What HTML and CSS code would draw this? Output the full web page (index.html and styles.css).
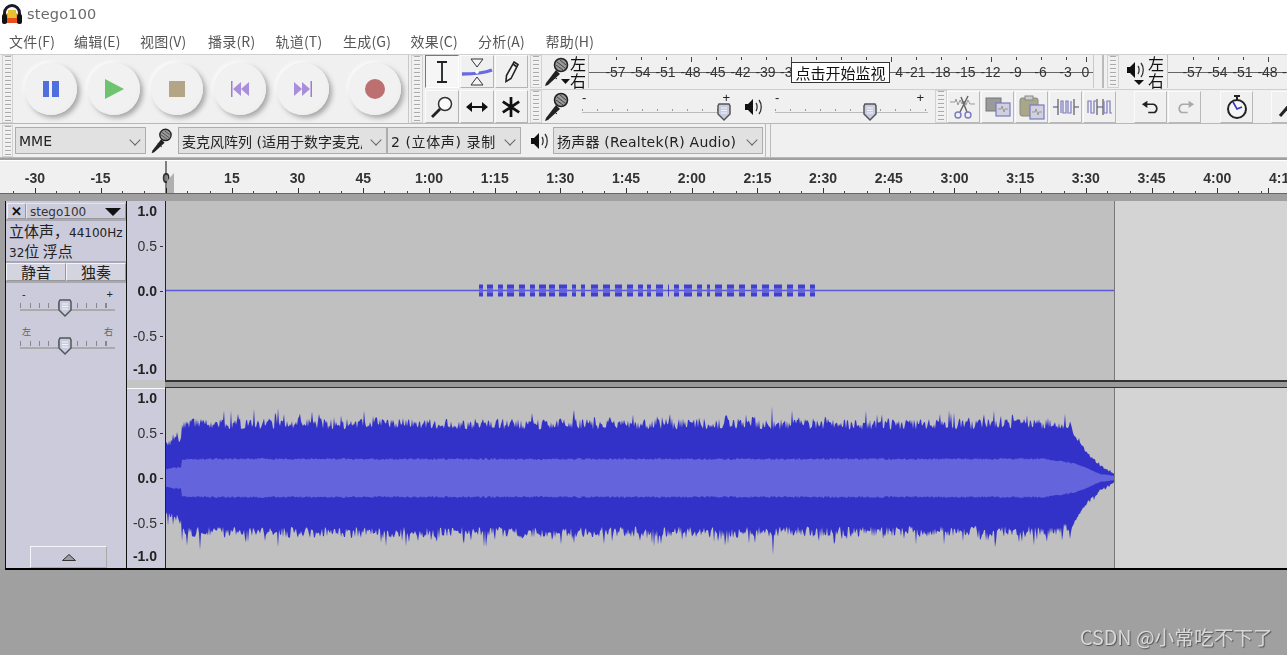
FILE: index.html
```html
<!DOCTYPE html>
<html lang="zh">
<head>
<meta charset="utf-8">
<title>stego100</title>
<link rel="stylesheet" href="styles.css">
</head>
<body>
<div class="app">
  <header class="titlebar">
    <svg class="logo" width="22" height="24" viewBox="0 0 22 24">
      <path d="M2 20V11a9 9 0 0 1 18 0v9h-3v-9a6 6 0 0 0-12 0v9z" fill="#1a1a2a"/>
      <rect x="5" y="11" width="12" height="10" rx="2" fill="#f0a020"/>
      <rect x="7" y="8" width="8" height="8" fill="#e8c030"/>
      <rect x="5" y="16" width="12" height="5" fill="#e85020"/>
      <rect x="1" y="12" width="5" height="10" rx="2" fill="#111"/>
      <rect x="16" y="12" width="5" height="10" rx="2" fill="#111"/>
    </svg>
    <span class="title-text">stego100</span>
  </header>

  <nav class="menubar">
    <span>文件(F)</span><span>编辑(E)</span><span>视图(V)</span><span>播录(R)</span><span>轨道(T)</span><span>生成(G)</span><span>效果(C)</span><span>分析(A)</span><span>帮助(H)</span>
  </nav>

  <section class="dock">
    <div class="grip grip-first"></div>
    <div class="transport">
      <button class="round"><svg width="20" height="18" viewBox="0 0 20 18"><rect x="2" y="1" width="6" height="16" fill="#4f6fdc"/><rect x="11" y="1" width="7" height="16" fill="#4f6fdc"/></svg></button>
      <button class="round"><svg width="22" height="22" viewBox="0 0 22 22"><path d="M2 1l19 10L2 21z" fill="#6ec46e"/></svg></button>
      <button class="round"><svg width="18" height="18" viewBox="0 0 18 18"><rect x="1" y="1" width="16" height="16" fill="#b3a585"/></svg></button>
      <button class="round"><svg width="20" height="18" viewBox="0 0 20 18"><rect x="1" y="1" width="1.5" height="16" fill="#9a7ed0"/><path d="M11 2L3 9l8 7zM19 2l-8 7 8 7z" fill="#a98edc"/></svg></button>
      <button class="round"><svg width="20" height="18" viewBox="0 0 20 18"><rect x="17.500" y="1" width="1.500" height="16" fill="#9a7ed0"/><path d="M1 2l8 7-8 7zM9 2l8 7-8 7z" fill="#a98edc"/></svg></button>
      <button class="round round-rec"><svg width="22" height="22" viewBox="0 0 22 22"><circle cx="11" cy="11" r="10" fill="#bd7070"/></svg></button>
    </div>
    <div class="grip grip-tools"></div>
    <div class="tools">
      <button class="tool tool-on"><svg width="16" height="24" viewBox="0 0 16 24"><path d="M3 2h10M3 22h10M8 2v20" stroke="#222" stroke-width="1.800" fill="none"/></svg></button>
      <button class="tool"><svg width="32" height="28" viewBox="0 0 32 28"><path d="M10 1h12l-6 8zM10 27h12l-6-8z" fill="#f4f4f4" stroke="#333"/><path d="M1 16c10 0 20 0 30-4" stroke="#6a6ae0" stroke-width="3.500" fill="none"/><circle cx="16" cy="14" r="1.800" fill="#fff"/></svg></button>
      <button class="tool"><svg width="18" height="24" viewBox="0 0 18 24"><path d="M12 2l4 2.500-7 14-5 3 .5-6z" fill="#f4f4f4" stroke="#222" stroke-width="1.600"/><path d="M11 4l4 3" stroke="#222" stroke-width="1.600"/></svg></button>
      <button class="tool"><svg width="24" height="24" viewBox="0 0 24 24"><circle cx="15" cy="9" r="6.500" fill="#fbfbfb" stroke="#333" stroke-width="1.500"/><path d="M10 14l-8 8" stroke="#222" stroke-width="2.800"/></svg></button>
      <button class="tool"><svg width="24" height="14" viewBox="0 0 24 14"><path d="M5 7h14" stroke="#111" stroke-width="2"/><path d="M1 7l6-5v10zM23 7l-6-5v10z" fill="#111"/></svg></button>
      <button class="tool"><svg width="20" height="22" viewBox="0 0 22 24"><path d="M11 1v22M2 6l18 12M20 6L2 18" stroke="#111" stroke-width="3"/></svg></button>
    </div>

    <div class="dock-right">
      <div class="dock-row">
        <div class="grip grip-small"></div>
        <svg class="mic mic-rec" width="26" height="30" viewBox="0 0 26 30"><use href="#mic-shape"/><path d="M17 22h9l-4.500 5z" fill="#111"/></svg>
        <div class="lr"><span>左</span><span>右</span></div>
        <div class="meter meter-rec">
          <span class="m">-57</span><span class="m">-54</span><span class="m">-51</span><span class="m major">-48</span><span class="m">-45</span><span class="m">-42</span><span class="m">-39</span><span class="m major m-l">-3</span><span class="m"></span><span class="m"></span><span class="m"></span><span class="m major m-r">4</span><span class="m">-21</span><span class="m">-18</span><span class="m">-15</span><span class="m major">-12</span><span class="m">-9</span><span class="m">-6</span><span class="m">-3</span><span class="m m-zero major">0</span>
          <span class="monitor">点击开始监视</span>
        </div>
        <div class="meter-end"></div>
        <div class="grip grip-meter2"></div>
        <svg class="speaker speaker-play" width="22" height="30" viewBox="0 0 22 30"><use href="#speaker-shape" y="3"/><path d="M8 23h10l-5 5z" fill="#111"/></svg>
        <div class="lr"><span>左</span><span>右</span></div>
        <div class="meter meter-play">
          <span class="m">-57</span><span class="m">-54</span><span class="m">-51</span><span class="m major">-48</span><span class="m m-l">-</span>
        </div>
      </div>
      <div class="dock-row">
        <div class="grip grip-small"></div>
        <svg class="mic" width="26" height="30" viewBox="0 0 26 30"><use href="#mic-shape"/></svg>
        <div class="slider slider-mic"><i class="minus">-</i><i class="plus">+</i><svg class="knob" width="16" height="20" viewBox="0 0 16 20"><use href="#knob-shape"/></svg></div>
        <svg class="speaker speaker-out" width="18" height="20" viewBox="0 0 18 20"><use href="#speaker-shape"/></svg>
        <div class="slider slider-out"><i class="minus">-</i><i class="plus">+</i><svg class="knob" width="16" height="20" viewBox="0 0 16 20"><use href="#knob-shape"/></svg></div>
        <div class="grip grip-edit"></div>
        <div class="edit-group">
          <button class="edit"><svg width="30" height="26" viewBox="0 0 30 26"><path d="M1 8h5l1-3 2 6 2-5 2 4 2-3 2 4 2-5 2 4h5" stroke="#999" fill="none"/><path d="M19 2L11 18M12 3l6 15" stroke="#666" stroke-width="1.500"/><circle cx="9" cy="21" r="3" fill="none" stroke="#7a7ac0" stroke-width="1.400"/><circle cx="19" cy="21" r="3" fill="none" stroke="#7a7ac0" stroke-width="1.400"/></svg></button>
          <button class="edit"><svg width="26" height="20" viewBox="0 0 26 20"><rect x="1" y="1" width="15" height="13" fill="#9a9a9a" stroke="#777"/><rect x="11" y="6" width="14" height="13" fill="#d0d0de" stroke="#7a7ac0" stroke-width="1.200"/><path d="M13 12h3l1-3 2 6 1-3h3" stroke="#999" fill="none"/></svg></button>
          <button class="edit"><svg width="26" height="26" viewBox="0 0 26 26"><rect x="1" y="4" width="18" height="18" rx="2" fill="#a8a888" stroke="#888"/><rect x="6" y="2" width="8" height="4" fill="#ccc" stroke="#888"/><rect x="11" y="11" width="14" height="14" fill="#d0d0de" stroke="#7a7ac0" stroke-width="1.200"/><path d="M13 18h3l1-3 2 6 1-3h3" stroke="#999" fill="none"/></svg></button>
          <button class="edit"><svg width="26" height="18" viewBox="0 0 26 18"><path d="M0 9h5M21 9h5" stroke="#7a7aa8" stroke-width="1.400"/><path d="M5 1v16M21 1v16" stroke="#666" stroke-width="1.300"/><path d="M8 15V3h2v12h3V3h2v12h3V3" stroke="#7a7ac0" stroke-width="1.200" fill="none"/></svg></button>
          <button class="edit"><svg width="26" height="18" viewBox="0 0 26 18"><path d="M10 9h6" stroke="#7a7aa8" stroke-width="1.400"/><path d="M10 1v16M16 1v16" stroke="#666" stroke-width="1.300"/><path d="M1 15V3h3v12h3V3h2M17 3v12h3V3h3v12h2" stroke="#7a7ac0" stroke-width="1.200" fill="none"/></svg></button>
        </div>
        <div class="undo-group">
          <button class="edit edit-undo"><svg width="20" height="16" viewBox="0 0 22 16"><path d="M6 5h8a5 5 0 0 1 1 9H8" stroke="#222" stroke-width="1.800" fill="none"/><path d="M1 5l6-4v8z" fill="#222"/></svg></button>
          <button class="edit edit-undo"><svg width="20" height="16" viewBox="0 0 22 16"><path d="M16 5H8a5 5 0 0 0-1 9h7" stroke="#aaa" stroke-width="1.800" fill="none"/><path d="M21 5l-6-4v8z" fill="#aaa"/></svg></button>
        </div>
        <button class="edit edit-timer"><svg width="22" height="26" viewBox="0 0 22 26"><rect x="8" y="1" width="6" height="2" fill="#222"/><path d="M11 3v3" stroke="#222" stroke-width="2"/><circle cx="11" cy="15" r="9" fill="#f6f6f6" stroke="#222" stroke-width="2"/><path d="M7 8l4 7 5-2" stroke="#3434c0" stroke-width="1.600" fill="none"/></svg></button>
        <button class="edit edit-zoom"><svg width="20" height="26" viewBox="0 0 20 26"><path d="M14 8L2 22" stroke="#222" stroke-width="3"/></svg></button>
      </div>
    </div>
  </section>

  <section class="devices">
    <div class="grip grip-dev"></div>
    <div class="combo combo-host"><span>MME</span></div>
    <svg class="mic mic-dev" width="26" height="26" viewBox="0 0 26 30"><use href="#mic-shape"/></svg>
    <div class="combo combo-in"><span>麦克风阵列 (适用于数字麦克风)</span></div>
    <div class="combo combo-ch"><span>2 (立体声) 录制</span></div>
    <svg class="speaker speaker-dev" width="18" height="20" viewBox="0 0 18 20"><use href="#speaker-shape"/></svg>
    <div class="combo combo-out"><span>扬声器 (Realtek(R) Audio)</span></div>
    <div class="dev-end"></div>
  </section>

  <section class="timeline">
    <span class="t">-30</span><span class="t">-15</span><span class="t t-zero">0</span><span class="t">15</span><span class="t">30</span><span class="t">45</span><span class="t">1:00</span><span class="t">1:15</span><span class="t">1:30</span><span class="t">1:45</span><span class="t">2:00</span><span class="t">2:15</span><span class="t">2:30</span><span class="t">2:45</span><span class="t">3:00</span><span class="t">3:15</span><span class="t">3:30</span><span class="t">3:45</span><span class="t">4:00</span><span class="t t-cut">4:1</span>
    <svg class="playhead" width="10" height="34" viewBox="0 0 10 34"><path d="M1 0v34" stroke="#111"/><path d="M2 20l7-8v20H2z" fill="#b0b0b0"/></svg>
  </section>

  <main class="tracks">
    <aside class="panel">
      <div class="panel-title">
        <button class="close">✕</button>
        <div class="name"><span>stego100</span><svg width="16" height="8" viewBox="0 0 16 8"><path d="M0 0h16L8 8z" fill="#111"/></svg></div>
      </div>
      <div class="info">
        <div>立体声，<small>44100Hz</small></div>
        <div><small>32</small>位 浮点</div>
      </div>
      <div class="mute-solo"><button>静音</button><button>独奏</button></div>
      <div class="pslider pslider-gain"><i class="pl">-</i><i class="pr">+</i><svg class="pknob" width="16" height="20" viewBox="0 0 16 20"><use href="#knob-shape"/></svg></div>
      <div class="pslider pslider-pan"><i class="pl pl-small">左</i><i class="pr pl-small">右</i><svg class="pknob" width="16" height="20" viewBox="0 0 16 20"><use href="#knob-shape"/></svg></div>
      <button class="collapse"><svg width="14" height="7" viewBox="0 0 14 7"><path d="M7 .5L13.500 6.500H.5z" fill="#9a9aa8" stroke="#333"/></svg></button>
    </aside>
    <div class="lanes">
      <div class="lane lane-a">
        <div class="vruler">
          <b>1.0</b><span class="tick">0.5</span><b class="tick">0.0</b><span class="tick">-0.5</span><b>-1.0</b>
        </div>
        <svg class="wave" width="948" height="179" viewBox="0 0 948 179">
          <path d="M0 89.500h948" stroke="#5a5ad8" stroke-width="1.300"/>
          <path id="t1peak" fill="#4040cc"/>
          <path id="t1rms" fill="#6464dc"/>
        </svg>
        <div class="blank"></div>
      </div>
      <div class="lane-sep"><div class="sep-ruler"></div><div class="sep-line"></div></div>
      <div class="lane lane-b">
        <div class="vruler">
          <b>1.0</b><span class="tick">0.5</span><b class="tick">0.0</b><span class="tick">-0.5</span><b>-1.0</b>
        </div>
        <svg class="wave" width="948" height="180" viewBox="0 0 948 180">
          <path id="t2peak" fill="#3232c8"/>
          <path id="t2rms" fill="#6464dc"/>
        </svg>
        <div class="blank"></div>
      </div>
    </div>
  </main>
  <div class="watermark">CSDN @小常吃不下了</div>
</div>

<svg class="defs" width="0" height="0">
  <defs>
    <g id="mic-shape">
      <path d="M12 13L2 26l-1 3 3-1 12-11z" fill="#222"/>
      <path d="M8 18l5 4" stroke="#222" stroke-width="1"/>
      <circle cx="17" cy="8" r="6.500" fill="#9a9a9a" stroke="#222" stroke-width="1.600"/>
      <path d="M13 5l8 6M12 8l7 5M16 3l6 5" stroke="#444"/>
    </g>
    <g id="speaker-shape">
      <path d="M1 7h3l5-5v16l-5-5H1z" fill="#111"/>
      <path d="M12 6c1.500 2 1.500 6 0 8M15 3c3 4 3 10 0 14" stroke="#333" stroke-width="1.300" fill="none"/>
    </g>
    <g id="knob-shape">
      <path d="M3 2h10l1 2v8l-6 6-6-6V4z" fill="#c8cce0" stroke="#555" stroke-width="1.500"/>
      <path d="M5 6h6M5 8.500h6M5 11h6" stroke="#f4f4ff"/>
    </g>
  </defs>
</svg>
<script src="script.js"></script>
</body>
</html>
```
FILE: styles.css
```css
* { box-sizing: border-box; }
html, body { margin: 0; padding: 0; height: 100%; overflow: hidden; }
body { background: #a0a0a0; font-family: "Noto Sans CJK SC", "Liberation Sans", sans-serif; }
button { font: inherit; padding: 0; margin: 0; border: 0; background: none; color: inherit; }
svg { display: block; flex: none; }
.defs { position: absolute; }

.app { position: relative; width: 1287px; height: 655px; overflow: hidden; filter: blur(0.4px); }

.titlebar { height: 28px; background: #fff; display: flex; align-items: center; padding-left: 1px; }
.logo { margin-right: 4px; }
.title-text { font: 14.500px "DejaVu Sans", sans-serif; color: #6a6a6a; letter-spacing: .2px; }

.menubar { height: 26px; background: #fff; display: flex; align-items: center; padding-left: 9px; font-size: 14px; color: #555; letter-spacing: .2px; }
.menubar span { width: 67.500px; flex: none; white-space: nowrap; }
.menubar span:nth-child(1) { width: 65px; }
.menubar span:nth-child(2) { width: 66px; }
.menubar span:nth-child(3) { width: 68px; }

.dock { height: 70px; background: #f0f0f0; display: flex; border-top: 1px solid #cfcfcf; border-bottom: 1px solid #b8b8b8; }
.grip { flex: none; background-color: #f0f0f0; background-image: repeating-linear-gradient(to bottom, #aaa 0 1px, #f4f4f4 1px 2px, #f0f0f0 2px 4px); background-size: 6px 100%; background-repeat: no-repeat; background-position: center; border: 1px solid #d2d2d2; }
.grip-first { width: 11px; margin-left: 2px; }
.transport { width: 397px; display: flex; align-items: center; gap: 11px; padding-left: 12px; border-right: 1px solid #c8c8c8; }
.round { width: 52px; height: 52px; border-radius: 50%; flex: none; display: flex; align-items: center; justify-content: center; background: radial-gradient(circle at 45% 45%, #f1f1f1 0 62%, #e6e6e6 100%); box-shadow: 3px 3px 5px #a8a8a8, -2px -2px 3px #fafafa; }
.round-rec { margin-left: 9px; }
.grip-tools { width: 12px; margin-left: 2px; margin-right: 2px; }
.tools { width: 103px; display: grid; grid-template-columns: repeat(3, 1fr); gap: 2px 1px; padding-top: 0; }
.tool { height: 33px; display: flex; align-items: center; justify-content: center; background: #f0f0f0; border: 1px solid; border-color: #fbfbfb #b4b4b4 #b4b4b4 #fbfbfb; }
.tool-on { background: #f6f6f6; border-color: #777 #fff #fff #777; }

.dock-right { flex: none; width: 757px; margin-left: 2px; display: flex; flex-direction: column; gap: 1px; overflow: hidden; }
.dock-row { height: 33px; display: flex; align-items: center; position: relative; }
.dock-row + .dock-row { border-top: 1px solid #cfcfcf; height: 34px; }
.grip-small { width: 12px; height: 100%; margin-right: 2px; }
.lr { width: 16px; height: 33px; flex: none; display: flex; flex-direction: column; font-size: 16px; line-height: 16.500px; color: #111; text-align: center; }
.meter { height: 33px; flex: none; position: relative; display: flex; align-items: center; overflow: hidden; font: 14px "Liberation Sans", sans-serif; color: #333; margin-left: 2px; padding-left: 15px; }
.meter::before { content: ""; position: absolute; left: 0; right: 0; top: 17px; height: 1px; background: #666; }
.meter::after { content: ""; position: absolute; left: 0; top: 0; bottom: 0; width: 1px; background: #c4c4c4; }
.meter-rec { width: 505px; }
.meter-play { width: 130px; padding-left: 13px; margin-left: 3px; }
.m { width: 25px; height: 16px; flex: none; text-align: center; position: relative; white-space: nowrap; }
.m::before { content: ""; position: absolute; left: 50%; top: -7px; width: 1px; height: 3px; background: #444; }
.major::before { height: 5px; }
.m-zero { margin-left: -5px; }
.m-l { text-align: left; padding-left: 2px; }
.m-r { text-align: right; padding-right: 0; }
.monitor { position: absolute; left: 203px; top: 7px; width: 99px; height: 21px; background: #fff; border: 1px solid #333; font: 15px "Noto Sans CJK SC", sans-serif; color: #111; display: flex; align-items: center; justify-content: center; white-space: nowrap; }
.meter-end { width: 11px; height: 33px; flex: none; border-left: 1px solid #c8c8c8; border-right: 2px solid #bbb; }
.grip-meter2 { width: 12px; height: 100%; margin-left: 3px; margin-right: 7px; }
.speaker-play { margin-right: 0; }

.slider { flex: none; height: 33px; position: relative; background: linear-gradient(#bbb, #bbb) 0 22px / 100% 1px no-repeat, repeating-linear-gradient(to right, #999 0 1px, transparent 1px 15px) 0 19px / 100% 2px no-repeat; }
.slider i { position: absolute; font: normal 13px "Liberation Sans", sans-serif; color: #222; top: 0; }
.slider .minus { left: 0; }
.slider-mic { width: 148px; margin-left: 12px; }
.slider-mic .plus { right: 0; }
.slider-out { width: 153px; margin-left: 13px; }
.slider-out .plus { right: 4px; }
.knob { position: absolute; top: 12px; }
.slider-mic .knob { left: 134px; }
.slider-out .knob { left: 87px; }
.speaker-out { margin-left: 14px; }
.grip-edit { width: 12px; height: 100%; margin-left: 7px; margin-right: 0; }
.edit-group { display: flex; gap: 1px; }
.edit { width: 33px; height: 32px; flex: none; display: flex; align-items: center; justify-content: center; background: #f0f0f0; border: 1px solid; border-color: #fbfbfb #b8b8b8 #b8b8b8 #fbfbfb; }
.undo-group { display: flex; gap: 1px; margin-left: 18px; }
.edit-timer { margin-left: 19px; }
.edit-zoom { margin-left: 18px; justify-content: flex-start; padding-left: 6px; }

.devices { height: 34px; background: #f0f0f0; display: flex; align-items: center; border-bottom: 1px solid #b8b8b8; }
.grip-dev { width: 11px; height: 32px; margin-left: 2px; margin-right: 2px; }
.combo { height: 27px; flex: none; background: #e1e1e1; border: 1px solid #adadad; display: flex; align-items: center; padding-left: 3px; font: 14px "DejaVu Sans", "Noto Sans CJK SC", sans-serif; color: #222; position: relative; overflow: hidden; white-space: nowrap; }
.combo span { display: block; overflow: hidden; flex: 1; margin-right: 20px; }
.combo::after { content: ""; position: absolute; right: 6px; top: 8px; width: 7px; height: 7px; border-right: 1px solid #666; border-bottom: 1px solid #666; transform: rotate(45deg); }
.combo-host { width: 131px; }
.mic-dev { margin: 0 3px 0 3px; }
.combo-in { width: 209px; }
.combo-in span { margin-right: 24px; }
.combo-ch { width: 134px; letter-spacing: .6px; }
.speaker-dev { margin: 0 5px 0 9px; }
.combo-out { width: 210px; letter-spacing: .2px; }
.dev-end { width: 6px; height: 34px; margin-left: 2px; border-left: 1px solid #bbb; border-right: 1px solid #bbb; }

.timeline { height: 34px; margin-top: 2px; background: #f0f0f0; display: flex; padding-left: 2px; position: relative; overflow: hidden; border-top: 1px solid #fff; border-bottom: 1px solid #666; }
.t { width: 65.700px; flex: none; text-align: center; font: bold 14px/34px "Liberation Sans", sans-serif; color: #333; position: relative; background: linear-gradient(#444, #444) 11px 100% / 1px 2px no-repeat, linear-gradient(#444, #444) 54px 100% / 1px 2px no-repeat; }
.t::after { content: ""; position: absolute; left: 50%; bottom: 0; width: 1px; height: 5px; background: #333; }
.t-cut { width: 36px; text-align: left; padding-left: 19px; }
.playhead { position: absolute; left: 165px; top: 0; }

.tracks { height: 461px; background: #a0a0a0; padding: 7px 0 0 5px; display: flex; align-items: flex-start; }
.panel { width: 122px; height: 369px; flex: none; background: #cbcbdb; border-left: 1px solid #111; border-right: 1px solid #111; border-bottom: 2px solid #000; position: relative; color: #222; }
.panel-title { height: 20px; display: flex; border-bottom: 2px solid #a8a8b4; padding: 2px 0 0 1px; }
.close { width: 19px; height: 16px; font-size: 13px; line-height: 14px; color: #111; font-weight: bold; border: 1px solid; border-color: #eee #999 #999 #eee; }
.name { flex: 1; display: flex; align-items: center; justify-content: space-between; padding: 1px 4px 0 3px; font: 12px "DejaVu Sans", sans-serif; color: #333; border: 1px solid; border-color: #e4e4ee #999 #999 #e4e4ee; height: 16px; }
.info { height: 42px; font-size: 15px; line-height: 20px; padding: 0 0 0 3px; color: #222; border-bottom: 2px solid #a8a8b4; white-space: nowrap; margin-top: 0; }
.info small { font: 12px "DejaVu Sans", sans-serif; }
.mute-solo { display: flex; height: 20px; border-bottom: 2px solid #a8a8b4; }
.mute-solo button { flex: 1; font-size: 15px; line-height: 16px; color: #222; border: 1px solid; border-color: #f4f4f8 #999 #999 #f4f4f8; background: #d4d4e0; }
.pslider { height: 38px; position: relative; margin: 0 11px 0 14px; background: linear-gradient(#aaa, #aaa) 0 25px / 100% 2px no-repeat, repeating-linear-gradient(to right, #888 0 1px, transparent 1px 9.500px) 0 19px / 100% 5px no-repeat; }
.pslider i { position: absolute; top: 5px; font: normal 11px/10px "Liberation Sans", sans-serif; color: #222; }
.pl { left: 2px; } .pr { right: 2px; }
.pslider i.pl-small { font: 9px/10px "Noto Sans CJK SC", sans-serif; color: #665; }
.pknob { position: absolute; left: 37px; top: 14px; }
.pslider-gain { margin-top: 1px; }
.collapse { position: absolute; left: 24px; bottom: 0; width: 77px; height: 22px; display: flex; align-items: center; justify-content: center; border: 1px solid; border-color: #f6f6fa #aaa #aaa #f6f6fa; }

.lanes { flex: 1; display: flex; flex-direction: column; }
.lane { display: flex; }
.lane-a { height: 179px; }
.lane-b { height: 180px; }
.vruler { width: 38px; flex: none; display: grid; grid-template-rows: 20px 50px 40px 50px 16px; background: #cbcbdb; text-align: right; font: 14px/1 "Liberation Sans", sans-serif; color: #333; }
.vruler > * { align-self: center; padding-right: 8px; position: relative; display: block; }
.vruler b { color: #222; }
.tick::after { content: ""; position: absolute; right: 2px; top: 50%; width: 3px; height: 1px; background: #333; }
.lane-b .vruler { box-shadow: inset 0 1px 0 #fafafa; }
.wave { background: #c0c0c0; box-shadow: -1px 0 0 #222; margin-left: 1px; }
.blank { flex: 1; background: #d4d4d4; border-left: 1px solid #777; }
.lane-sep { height: 8px; display: flex; }
.sep-ruler { width: 38px; background: #c4c4c4; }
.sep-line { flex: 1; background: #999; border-top: 2px solid #333; border-bottom: 1px solid #333; }
.lanes::after { content: ""; height: 2px; background: #000; }

.watermark { position: absolute; left: 1080px; top: 622px; font: 19.700px "Noto Sans CJK SC", sans-serif; color: #d8d8d8; text-shadow: 1px 1px 1px #555; white-space: nowrap; }
```
FILE: script.js
```js
(function () {
  var seed = 20240611;
  function rnd() {
    seed = (seed * 1664525 + 1013904223) % 4294967296;
    return seed / 4294967296;
  }
  function lerp(points, x) {
    for (var i = 1; i < points.length; i++) {
      if (x <= points[i][0]) {
        var a = points[i - 1], b = points[i];
        return a[1] + (b[1] - a[1]) * (x - a[0]) / (b[0] - a[0]);
      }
    }
    return points[points.length - 1][1];
  }
  var peakEnv = [[0, 36], [14, 42], [18, 55], [880, 54], [906, 50], [908, 44], [921, 25], [934, 13], [948, 5]];
  var rmsEnv = [[0, 9], [15, 11], [16, 19], [880, 19], [907, 15], [921, 10], [934, 4], [948, 2]];
  var cy = 90, top = [], bot = [], rt = [], rb = [];
  for (var x = 0; x <= 948; x++) {
    var p = lerp(peakEnv, x), r = lerp(rmsEnv, x), k = x > 905 ? 0.3 : 1;
    var up = p + (rnd() * 11 - 6) * k + (rnd() < 0.14 ? rnd() * 12 * k : 0);
    var dn = p + (rnd() * 11 - 6) * k + (rnd() < 0.14 ? rnd() * 13 * k : 0);
    if (x === 606) up = 72;
    if (x === 607) dn = 77;
    top.push(x + " " + (cy - up).toFixed(1));
    bot.unshift(x + " " + (cy + dn).toFixed(1));
    var rr = r + (rnd() * 2 - 1) * k;
    rt.push(x + " " + (cy - rr).toFixed(1));
    rb.unshift(x + " " + (cy + rr).toFixed(1));
  }
  document.getElementById("t2peak").setAttribute("d", "M" + top.concat(bot).join("L") + "Z");
  document.getElementById("t2rms").setAttribute("d", "M" + rt.concat(rb).join("L") + "Z");

  var blocks = [[479,483],[487,493],[498,503],[507,514],[519,525],[530,535],[539,546],[549,555],[559,567],[572,576],[581,585],[591,598],[603,610],[615,622],[627,633],[638,643],[647,651],[656,663],[668,669],[674,679],[684,692],[697,702],[707,710],[715,722],[727,734],[739,745],[751,757],[762,769],[774,782],[787,793],[798,805],[810,815]];
  var pk = "", rm = "";
  blocks.forEach(function (b) {
    var a = b[0] - 166, w = b[1] - b[0];
    pk += "M" + a + " 83.5h" + w + "v12h-" + w + "z";
    if (w > 2) rm += "M" + a + " 87h" + w + "v5h-" + w + "z";
  });
  document.getElementById("t1peak").setAttribute("d", pk);
  document.getElementById("t1rms").setAttribute("d", rm);
})();
```
